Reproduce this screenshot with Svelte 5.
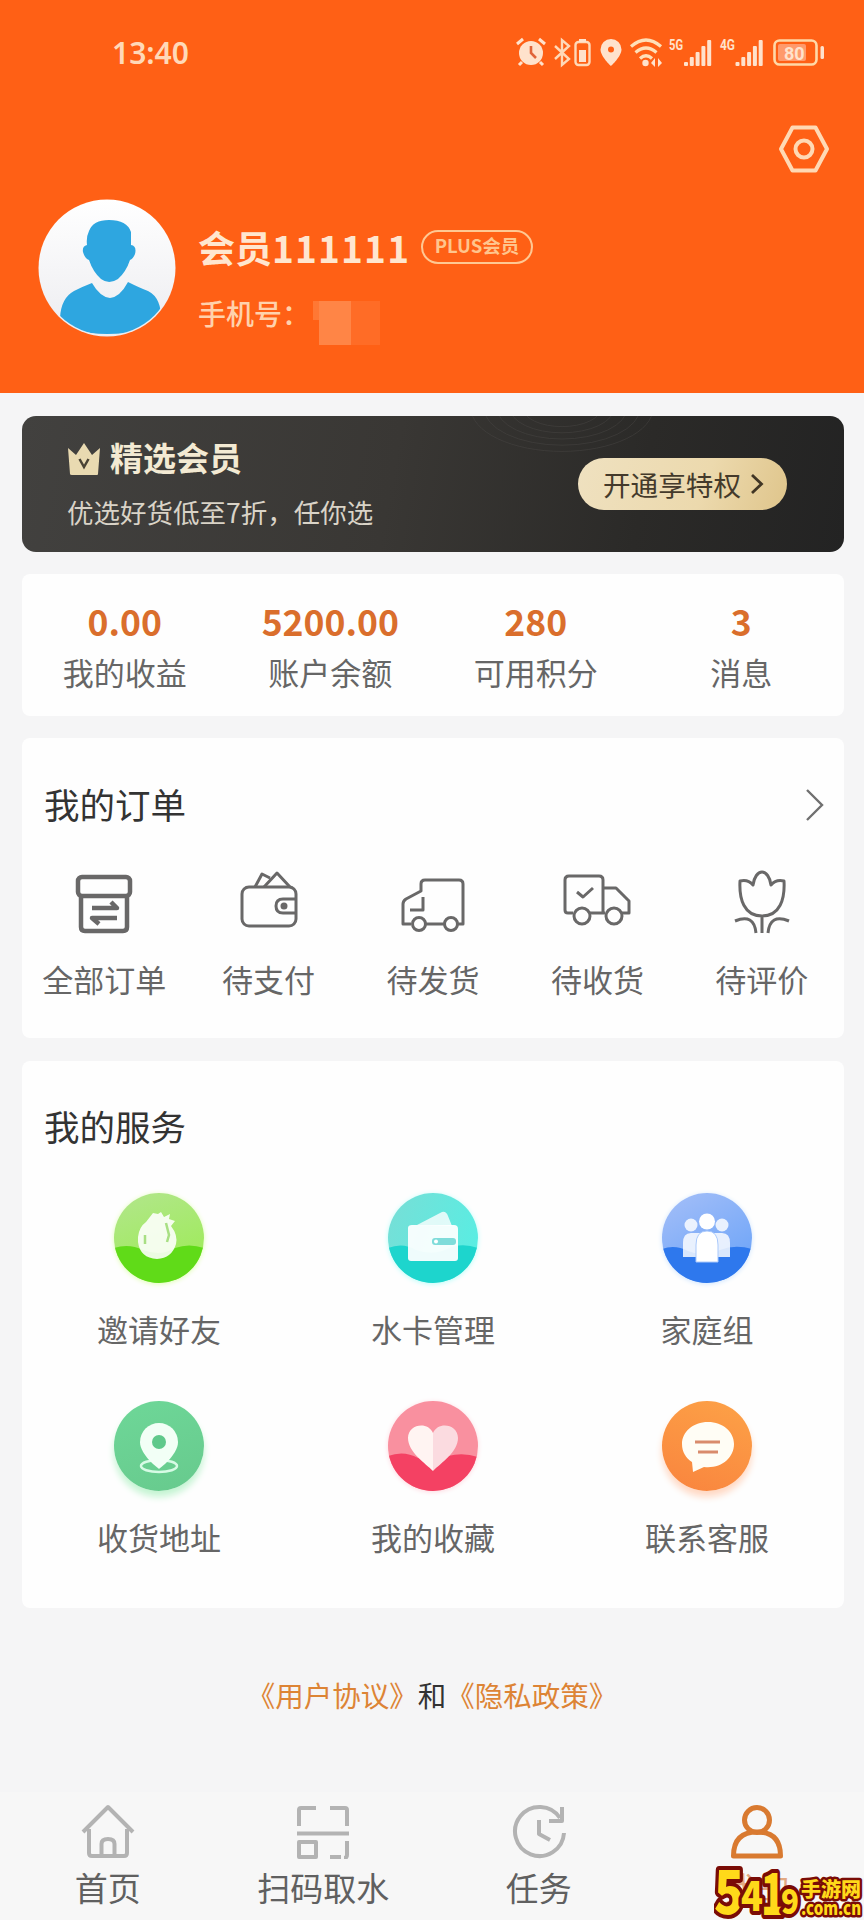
<script>
	const stats = [
		{ value: "0.00", label: "我的收益" },
		{ value: "5200.00", label: "账户余额" },
		{ value: "280", label: "可用积分" },
		{ value: "3", label: "消息" },
	];

	const orders = [
		{ icon: "all", label: "全部订单" },
		{ icon: "pay", label: "待支付" },
		{ icon: "ship", label: "待发货" },
		{ icon: "receive", label: "待收货" },
		{ icon: "review", label: "待评价" },
	];

	const services = [
		{ icon: "invite", label: "邀请好友" },
		{ icon: "card", label: "水卡管理" },
		{ icon: "family", label: "家庭组" },
		{ icon: "address", label: "收货地址" },
		{ icon: "favorite", label: "我的收藏" },
		{ icon: "contact", label: "联系客服" },
	];

	const tabs = [
		{ icon: "home", label: "首页" },
		{ icon: "scan", label: "扫码取水" },
		{ icon: "task", label: "任务" },
		{ icon: "me", label: "我的" },
	];

	const active = "me";
	const bars = [4, 9, 14, 20, 26];
</script>

<main>
	<header>
		<div class="status">
			<span class="time">13:40</span>
			<svg class="statusIcons" width="312" height="32" viewBox="0 0 312 32" fill="#ffe2cc">
				<!-- alarm -->
				<circle cx="17" cy="17" r="12" />
				<path d="M3 8l6-5M31 8l-6-5M8 26l-3 3M26 26l3 3" stroke="#ffe2cc" stroke-width="3" />
				<path d="M17 10v7l5 5" fill="none" stroke="#e0643a" stroke-width="2.6" />
				<!-- bluetooth -->
				<path d="M41 10l14 13-7 6V4l7 6-14 13" fill="none" stroke="#ffd9b8" stroke-width="2.4" />
				<rect x="61.500" y="6" width="14" height="23" rx="3" fill="none" stroke="#ffd9b8" stroke-width="2.4" />
				<rect x="65" y="3" width="7" height="3" />
				<rect x="65" y="14" width="7" height="12" />
				<!-- location -->
				<path fill-rule="evenodd" d="M97 3a10.500 10.500 0 0 0-10.500 10.500c0 7 10.500 16.500 10.500 16.500s10.500-9.500 10.500-16.500A10.500 10.500 0 0 0 97 3zm0 7.500a3 3 0 1 1 0 6 3 3 0 0 1 0-6z" />
				<!-- wifi -->
				<g fill="none" stroke="#ffe0b8" stroke-width="3.200">
					<path d="M117 10.500q15-13 30 0M121.500 16.500q10.500-9 21 0M126 22.500q6-5.500 12 0" />
				</g>
				<circle cx="131.500" cy="27" r="3.200" />
				<path d="M141 22l-4 5 4 4zM144 22l4 5-4 4z" />
				<text class="net" x="155" y="14" textLength="14" lengthAdjust="spacingAndGlyphs">5G</text>
				<text class="net" x="206" y="14" textLength="15" lengthAdjust="spacingAndGlyphs">4G</text>
				{#each bars as h, i}
					<rect x={170 + i * 5.8} y={30 - h} width="4" height={h} rx="1" />
					<rect x={221.5 + i * 5.8} y={30 - h} width="4" height={h} rx="1" />
				{/each}
				<rect x="260.500" y="4.500" width="42" height="24" rx="5" fill="none" stroke="#ffd9a8" stroke-width="2.600" />
				<rect x="264" y="8" width="28" height="17" rx="2" fill="#ff9a6c" />
				<text class="level" x="270" y="23.500">80</text>
				<rect x="306.500" y="10" width="3.500" height="13" rx="1.500" />
			</svg>
		</div>

		<div class="settings">
			<svg width="54" height="50" viewBox="0 0 54 50" fill="none" stroke="#ffd9b4" stroke-width="4" stroke-linejoin="round">
				<path d="M15.500 3.500h23L50 25 38.500 46.500h-23L4 25z" />
				<circle cx="27" cy="25" r="8.500" />
			</svg>
		</div>

		<div class="profile">
			<svg class="avatar" width="138" height="138" viewBox="0 0 138 138">
				<defs>
					<linearGradient id="face" x1="0" y1="0" x2="0" y2="1">
						<stop offset="0" stop-color="#fff" />
						<stop offset="1" stop-color="#ececf0" />
					</linearGradient>
					<clipPath id="round"><circle cx="69" cy="69" r="67" /></clipPath>
				</defs>
				<circle cx="69" cy="69" r="68.500" fill="url(#face)" />
				<g fill="#2ea6e0" clip-path="url(#round)">
					<path d="M51 32q4-11 20-11 18 0 22 12v13q6 1 4 9-2 5-5 6-4 12-12 19-9 6-17 0-8-7-12-19-4-1-6-8-1-6 4-7-1-8 2-14z" />
					<path d="M54 84q8 14 18 15 10-1 18-16 12 6 20 9 14 7 13 30-16 13-54 13-36 0-47-16 1-20 14-27 10-5 18-8z" />
				</g>
			</svg>
			<div class="who">
				<div class="nameRow">
					<span class="name">会员<i>111111</i></span>
					<span class="plus">PLUS会员</span>
				</div>
				<div class="phone">
					<span>手机号：</span>
					<svg width="74" height="50" viewBox="0 0 74 50">
						<rect x="0" y="3" width="38" height="19" fill="#ff7834" />
						<rect x="6" y="3" width="32" height="44" fill="#ff8546" />
						<rect x="38" y="3" width="29" height="44" fill="#ff6c26" />
					</svg>
				</div>
			</div>
		</div>
	</header>

	<section class="vip">
		<svg class="rings" width="300" height="120" viewBox="0 0 300 120" fill="none" stroke="#4b4a47" stroke-width="1">
			{#each [30, 40, 50, 60, 70] as r}
				<ellipse cx="140" cy="-8" rx={r * 1.3} ry={r * 0.62} opacity="0.45" />
			{/each}
		</svg>
		<div class="vipText">
			<div class="vipTitle">
				<svg width="34" height="34" viewBox="0 0 34 34">
					<path d="M1 6l8 7 8-12 8 12 8-7-2 26q0 1-1 1H5q-2 0-2-1z" fill="#e9dab1" />
					<path d="M12.500 17l4.500 8 4.500-8" fill="none" stroke="#4a4334" stroke-width="2.500" />
				</svg>
				<span>精选会员</span>
			</div>
			<div class="vipSub">优选好货低至7折，任你选</div>
		</div>
		<div class="open">
			<span>开通享特权</span>
			<svg width="14" height="22" viewBox="0 0 14 22" fill="none" stroke="#413625" stroke-width="2.800">
				<path d="M2 2l9.500 9L2 20" />
			</svg>
		</div>
	</section>

	<section class="card stats">
		{#each stats as { value, label }}
			<div class="stat">
				<b>{value}</b>
				<span>{label}</span>
			</div>
		{/each}
	</section>

	<section class="card orders">
		<div class="head">
			<h2>我的订单</h2>
			<svg width="20" height="36" viewBox="0 0 20 36" fill="none" stroke="#707070" stroke-width="2.400">
				<path d="M2 4l15 15L2 34" />
			</svg>
		</div>
		<div class="orderRow">
			{#each orders as { icon, label }}
				<div class="order">
					<svg width="70" height="66" viewBox="0 0 70 66" fill="none" stroke="#696868" stroke-width="3" stroke-linejoin="round">
						{#if icon === "all"}
							<g stroke-width="4.500">
								<rect x="9" y="7" width="52" height="19" rx="4" />
								<path d="M12 27v30q0 4 4 4h38q4 0 4-4V27" />
								<path d="M23 38h25l-6-6M48 48H23l7 6" />
							</g>
						{:else if icon === "pay"}
							<rect x="8" y="17" width="54" height="39" rx="7" />
							<path d="M62 29H49q-7 0-7 7t7 7h13M21 17l7-13 8 4M30 17L43 3l13 14" />
							<circle cx="50" cy="36" r="2" fill="#696868" />
						{:else if icon === "ship"}
							<path d="M13 54H5V34q0-3 3-5l15-8V14q0-4 4-4h34q4 0 4 4v40h-6M28 54h18M25 27v13H12" />
							<circle cx="21" cy="54" r="6.500" />
							<circle cx="53" cy="54" r="6.500" />
						{:else if icon === "receive"}
							<path d="M11 43H6q-3 0-3-3V10q0-4 4-4h30q4 0 4 4v33M28 43h15M60 43h7V31L54 18H41M15 22l6 5 10-9" />
							<circle cx="20" cy="46" r="8" />
							<circle cx="52" cy="46" r="8" />
						{:else}
							<path d="M13 11q8-2 13 4c1-8 5-13 9-13s8 5 9 13q5-6 13-4c1 18-4 35-22 35S12 29 13 11zM35 46v17M8 51q19-8 21 12M62 51q-19-8-21 12" />
						{/if}
					</svg>
					<span>{label}</span>
				</div>
			{/each}
		</div>
	</section>

	<section class="card services">
		<h2>我的服务</h2>
		<div class="grid">
			{#each services as { icon, label }}
				<div class="service">
					<div class="disc {icon}">
						<svg width="90" height="90" viewBox="0 0 90 90" fill="#fff">
							{#if icon === "invite"}
								<path d="M0 55q15-5 29 2 18 7 32-2 14-5 29 0v35H0z" fill="#60db18" />
								<path d="M24 44q1-10 8-15l7-9 5 1 3-2 3 5 6-3-1 5 6 2-4 5q7 9 5 18-4 14-19 15-17-1-19-17z" opacity="0.880" />
								<path d="M31 42v9M52 30l3 12-2 7" stroke="#a8df83" stroke-width="2.500" fill="none" />
							{:else if icon === "card"}
								<path d="M0 55q15-6 28 2 17 6 31-1 14-7 31-1v35H0z" fill="#1dd5cd" />
								<path d="M29 32l25-13q4-1 6 4l4 10z" opacity="0.800" />
								<path d="M20 35q0-3 4-3h42q4 0 4 4v29q0 3-3 3H23q-3 0-3-3z" opacity="0.930" />
								<rect x="44" y="45" width="24" height="7" rx="3" fill="#7fdcda" />
								<circle cx="48" cy="48.500" r="2" />
							{:else if icon === "family"}
								<path d="M0 56q13-5 26 2 16 7 32-1 15-6 32-1v34H0z" fill="#2e78ed" />
								<g opacity="0.820">
									<circle cx="29" cy="32" r="6.500" /><circle cx="60" cy="32" r="6.500" />
									<path d="M21 64V50q0-10 8-10h31q8 0 8 10v14z" />
								</g>
								<circle cx="45" cy="28.500" r="8" />
								<path d="M34 69V52q0-14 11-14t11 14v17z" stroke="#aac9fb" stroke-width="1" />
							{:else if icon === "address"}
								<ellipse cx="45" cy="65" rx="18" ry="6" fill="none" stroke="#d7fbe5" stroke-width="2.500" />
								<path d="M45 22a19 19 0 0 0-19 19c0 13 19 27 19 27s19-14 19-27a19 19 0 0 0-19-19z" fill="#f2fff6" />
								<circle cx="45" cy="41" r="7" fill="#5fc98b" />
							{:else if icon === "favorite"}
								<path d="M0 55q16-6 30 2 16 5 30-2 15-4 30 1v34H0z" fill="#f44163" />
								<path d="M45 32c-5-12-25-9-25 5 0 14 17 25 25 33z" fill="#fff4f2" />
								<path d="M45 32c5-12 25-9 25 5 0 14-17 25-25 33z" fill="#fbdbe0" />
							{:else}
								<path d="M46 21c-15 0-26 10-26 22 0 8 4 14 10 18l1 10 11-5c17 2 30-9 30-23 0-12-11-22-26-22z" fill="#fffdf5" />
								<path d="M33 41h25M36 51h20" stroke="#d98b6c" stroke-width="3" />
							{/if}
						</svg>
					</div>
					<span>{label}</span>
				</div>
			{/each}
		</div>
	</section>

	<p class="terms"><a>《用户协议》</a>和<a>《隐私政策》</a></p>

	<nav>
		{#each tabs as { icon, label }}
			<div class="tab" class:active={icon === active}>
				<svg width="56" height="56" viewBox="0 0 56 56" fill="none" stroke="currentColor" stroke-width="4" stroke-linejoin="round">
					{#if icon === "home"}
						<path d="M3 29L28 4l25 25M9 26v24q0 3 3 3h32q3 0 3-3V26M21.500 53V41q0-5 6.500-5t6.500 5v12" />
					{:else if icon === "scan"}
						<path d="M4 23V7q0-2 2-2h15M35 5h15q2 0 2 2v16M2 30.500h52M4 39h17v15H4zM52 38v14q0 3-3 3M46 54H35" />
					{:else if icon === "task"}
						<path d="M49 15A24.500 24.500 0 1 0 53 30M51 4v14H38M28 17v14l11 6" />
					{:else}
						<g stroke-width="5">
							<circle cx="29" cy="17" r="12.500" />
							<path d="M5.500 53q0-24 23.500-24t23.500 24z" />
						</g>
					{/if}
				</svg>
				<span>{label}</span>
			</div>
		{/each}
		<svg class="mark" width="150" height="54" viewBox="0 0 150 54">
			<g fill="#ffd91a" stroke="#7a0c06" stroke-linejoin="round" paint-order="stroke">
				<g stroke-width="8">
					<text x="0" y="48" font-size="60" textLength="30" lengthAdjust="spacingAndGlyphs">5</text>
					<text x="27" y="45" font-size="42" textLength="22" lengthAdjust="spacingAndGlyphs">4</text>
					<text x="47" y="49" font-size="58" textLength="24" lengthAdjust="spacingAndGlyphs">1</text>
					<text x="67" y="48" font-size="35" textLength="18" lengthAdjust="spacingAndGlyphs">9</text>
				</g>
				<g stroke-width="5">
					<text x="87" y="31" font-size="20" textLength="60" lengthAdjust="spacingAndGlyphs">手游网</text>
					<text x="87" y="49" font-size="18" textLength="60" lengthAdjust="spacingAndGlyphs">.com.cn</text>
				</g>
			</g>
		</svg>
	</nav>
</main>

<style>
	:global(body) {
		margin: 0;
		background: #f5f5f6;
	}

	main {
		display: flex;
		flex-direction: column;
		width: 864px;
		height: 1920px;
		overflow: hidden;
		background: #f5f5f6;
		color: #666;
		font-family: "Noto Sans CJK SC", sans-serif;
	}

	main * {
		box-sizing: border-box;
	}

	svg {
		display: block;
		flex: none;
	}

	h2, p {
		margin: 0;
	}

	header {
		height: 393px;
		flex: none;
		background: #ff6015;
		color: #ffe6cf;
	}

	.status {
		display: flex;
		justify-content: space-between;
		align-items: center;
		height: 104px;
		padding: 0 38px 0 112px;
	}

	.time {
		padding-top: 2px;
		font-family: "Noto Sans", sans-serif;
		font-size: 30px;
		font-weight: 600;
		line-height: 36px;
		color: #ffd9b8;
	}

	.net {
		font: 700 14px Roboto, sans-serif;
	}

	.level {
		font: 700 18px Roboto, sans-serif;
	}

	.settings {
		display: flex;
		justify-content: flex-end;
		height: 95px;
		padding: 20px 33px 0 0;
	}

	.profile {
		display: flex;
		padding-left: 38px;
	}

	.who {
		padding: 24px 0 0 22px;
	}

	.nameRow {
		display: flex;
		align-items: center;
		height: 48px;
	}

	.name {
		width: 223px;
		font-size: 37px;
		font-weight: 700;
		line-height: 48px;
		white-space: nowrap;
	}

	.name i {
		font-style: normal;
		letter-spacing: 1.2px;
	}

	.plus {
		width: 112px;
		height: 34px;
		border: 2.5px solid #ffc893;
		border-radius: 17px;
		color: #ffc58d;
		font-size: 18.5px;
		font-weight: 700;
		line-height: 27px;
		text-align: center;
	}

	.phone {
		display: flex;
		margin-top: 26px;
		height: 50px;
		color: #ffd2ac;
		font-size: 28px;
		font-weight: 500;
		line-height: 32px;
	}

	.phone span {
		width: 115px;
	}

	.phone svg {
		margin-top: 1px;
	}

	.vip {
		position: relative;
		display: flex;
		flex: none;
		justify-content: space-between;
		width: 822px;
		height: 136px;
		margin: 23px 0 0 22px;
		padding: 0 57px 0 45px;
		border-radius: 14px;
		overflow: hidden;
		background: linear-gradient(100deg, #42413f, #393734 45%, #2b2a28 75%, #232323);
	}

	.rings {
		position: absolute;
		top: 0;
		left: 400px;
	}

	.vipTitle {
		display: flex;
		align-items: center;
		gap: 9px;
		height: 44px;
		margin-top: 19px;
		color: #f3ead3;
		font-size: 33px;
		font-weight: 700;
		line-height: 44px;
	}

	.vipTitle svg {
		margin-top: 3px;
	}

	.vipSub {
		margin-top: 15px;
		color: #d9d3c7;
		font-size: 26.5px;
		line-height: 36px;
	}

	.open {
		display: flex;
		align-items: center;
		gap: 9px;
		width: 209px;
		height: 52px;
		margin-top: 42px;
		padding-left: 25px;
		border-radius: 26px;
		background: linear-gradient(110deg, #efe1c0, #ecd9ad 60%, #dfc58b);
		color: #443a2b;
		font-size: 27.6px;
		line-height: 48px;
		position: relative;
	}

	.open span {
		margin-top: -1px;
	}

	.card {
		flex: none;
		width: 822px;
		margin-left: 22px;
		border-radius: 8px;
		background: #fefefe;
	}

	.stats {
		display: flex;
		height: 142px;
		margin-top: 22px;
		padding-top: 26px;
	}

	.stat {
		display: flex;
		flex: 1;
		flex-direction: column;
		align-items: center;
	}

	.stat b {
		color: #da6e2c;
		font-size: 35.5px;
		line-height: 42px;
	}

	.stat span {
		margin-top: 9px;
		font-size: 31px;
		line-height: 42px;
	}

	.orders {
		height: 300px;
		margin-top: 22px;
		padding-top: 43px;
	}

	.head {
		display: flex;
		align-items: center;
		justify-content: space-between;
		padding-right: 19px;
	}

	h2 {
		padding-left: 22px;
		color: #333;
		font-size: 35.5px;
		font-weight: 400;
		line-height: 46px;
	}

	.orderRow {
		display: flex;
		margin-top: 43px;
	}

	.order {
		display: flex;
		flex: 1;
		flex-direction: column;
		align-items: center;
	}

	.order span {
		margin-top: 22px;
		font-size: 31px;
		line-height: 42px;
	}

	.services {
		height: 547px;
		margin-top: 23px;
		padding-top: 42px;
	}

	.grid {
		display: grid;
		grid-template-columns: repeat(3, 1fr);
		margin-top: 44px;
	}

	.service {
		display: flex;
		flex-direction: column;
		align-items: center;
		height: 208px;
	}

	.service span {
		margin-top: 25px;
		font-size: 31px;
		line-height: 42px;
	}

	.disc {
		width: 90px;
		height: 90px;
		border-radius: 50%;
	}

	.disc svg {
		border-radius: 50%;
	}

	.invite {
		background: linear-gradient(160deg, #b2e68c, #9aec4e);
		box-shadow: 0 1px 5px #dfffb0;
	}

	.card.disc {
		width: 90px;
		margin-left: 0;
		border-radius: 50%;
		background: linear-gradient(110deg, #78ded6, #55efe4);
		box-shadow: 0 1px 5px #b8fffa;
	}

	.family {
		background: linear-gradient(150deg, #a5bff8, #64a0f8);
		box-shadow: 0 1px 5px #cfe5ff;
	}

	.address {
		background: linear-gradient(160deg, #6ed798, #67ca8d);
		box-shadow: 0 6px 7px #c4f4d2;
	}

	.favorite {
		background: #f9909f;
		box-shadow: 0 1px 5px #ffd9e0;
	}

	.contact {
		background: linear-gradient(200deg, #fda247, #f9843e);
		box-shadow: 0 6px 7px #ffd8c3;
	}

	.terms {
		margin-top: 67px;
		color: #333;
		font-size: 28.5px;
		line-height: 40px;
		text-align: center;
	}

	.terms a {
		color: #dd8435;
	}

	nav {
		position: relative;
		display: flex;
		height: 128px;
		margin-top: auto;
		background: #f7f7f7;
	}

	.tab {
		display: flex;
		flex: 1;
		flex-direction: column;
		align-items: center;
		padding-top: 11px;
		color: #b3b3b3;
	}

	.tab span {
		margin-top: 7px;
		color: #606060;
		font-size: 33px;
		line-height: 42px;
	}

	.tab.active {
		padding-left: 2px;
		color: #d97a30;
	}

	.tab.active span {
		color: #e3a983;
	}

	.mark {
		position: absolute;
		right: 0;
		bottom: 0;
		font-family: "Noto Sans CJK SC", sans-serif;
		font-weight: 900;
	}
</style>
